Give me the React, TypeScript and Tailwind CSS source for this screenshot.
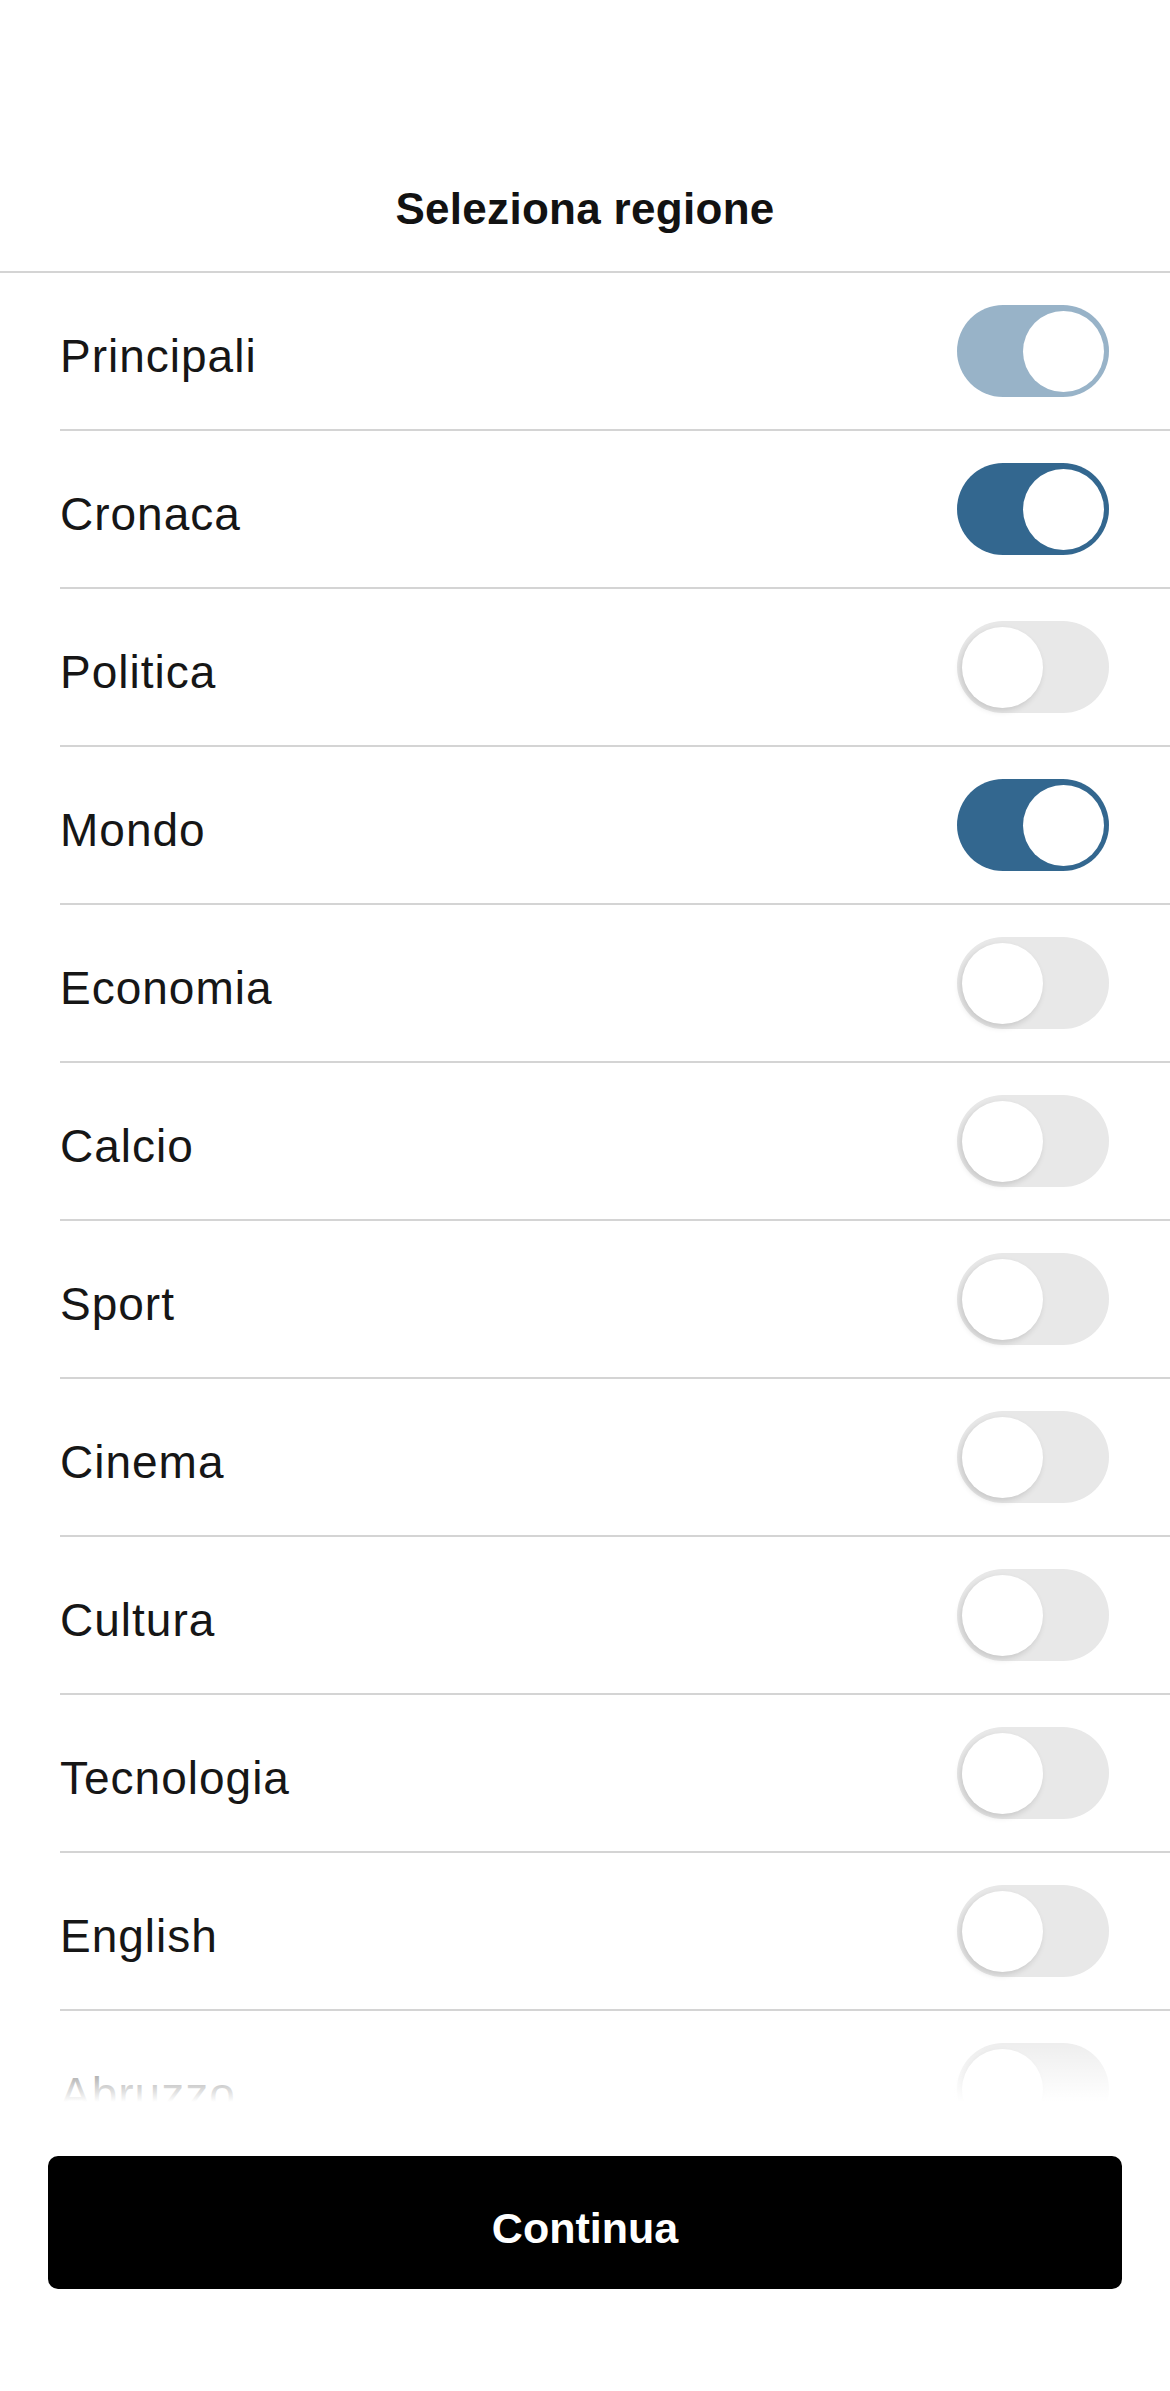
import { useState } from "react";

type Topic = { name: string; on: boolean; locked?: boolean };

const initialTopics: Topic[] = [
  { name: "Principali", on: true, locked: true },
  { name: "Cronaca", on: true },
  { name: "Politica", on: false },
  { name: "Mondo", on: true },
  { name: "Economia", on: false },
  { name: "Calcio", on: false },
  { name: "Sport", on: false },
  { name: "Cinema", on: false },
  { name: "Cultura", on: false },
  { name: "Tecnologia", on: false },
  { name: "English", on: false },
  { name: "Abruzzo", on: false },
];

function Toggle({
  on,
  locked,
  onClick,
}: {
  on: boolean;
  locked?: boolean;
  onClick: () => void;
}) {
  const track = on
    ? locked
      ? "bg-[#98b3c8] justify-end"
      : "bg-[#33678f] justify-end"
    : "bg-[#e8e8e8] justify-start";

  return (
    <button
      type="button"
      onClick={onClick}
      className={`flex h-[92px] w-[152px] shrink-0 items-center rounded-full px-[5px] ${track}`}
    >
      <span
        className={`block h-[81px] w-[81px] rounded-full bg-white ${
          on ? "" : "shadow-[-2px_3px_6px_rgba(0,0,0,0.14)]"
        }`}
      />
    </button>
  );
}

export default function App() {
  const [topics, setTopics] = useState<Topic[]>(initialTopics);

  const flip = (i: number) => {
    setTopics((prev) =>
      prev.map((t, idx) => (idx === i && !t.locked ? { ...t, on: !t.on } : t))
    );
  };

  return (
    <div className="flex h-[2391px] w-full flex-col bg-white font-['Liberation_Sans',Arial,sans-serif] text-[#161616]">
      <header className="h-[273px] shrink-0 border-b-2 border-[#d4d4d4] pt-[182px] text-center">
        <h1 className="text-[44px] font-bold leading-[54px] tracking-[0.3px] text-[#121212]">
          Seleziona regione
        </h1>
      </header>

      <div className="relative flex-1 overflow-hidden">
        <ul>
          {topics.map((t, i) => (
            <li key={t.name} className="pl-[60px]">
              <div className="flex h-[158px] items-center justify-between border-b-2 border-[#d4d4d4] pr-[61px]">
                <span className="pt-[10px] text-[46px] leading-[54px] tracking-[1px]">
                  {t.name}
                </span>
                <Toggle on={t.on} locked={t.locked} onClick={() => flip(i)} />
              </div>
            </li>
          ))}
        </ul>
        <div className="pointer-events-none absolute inset-x-0 bottom-0 h-[80px] bg-linear-to-b from-white/0 to-white" />
      </div>

      <footer className="shrink-0 px-[48px] pb-[102px] pt-[54px]">
        <button
          type="button"
          className="flex h-[133px] w-full items-center justify-center rounded-[10px] bg-black pt-[10px] text-[43px] font-bold leading-[54px] text-white"
        >
          Continua
        </button>
      </footer>
    </div>
  );
}
